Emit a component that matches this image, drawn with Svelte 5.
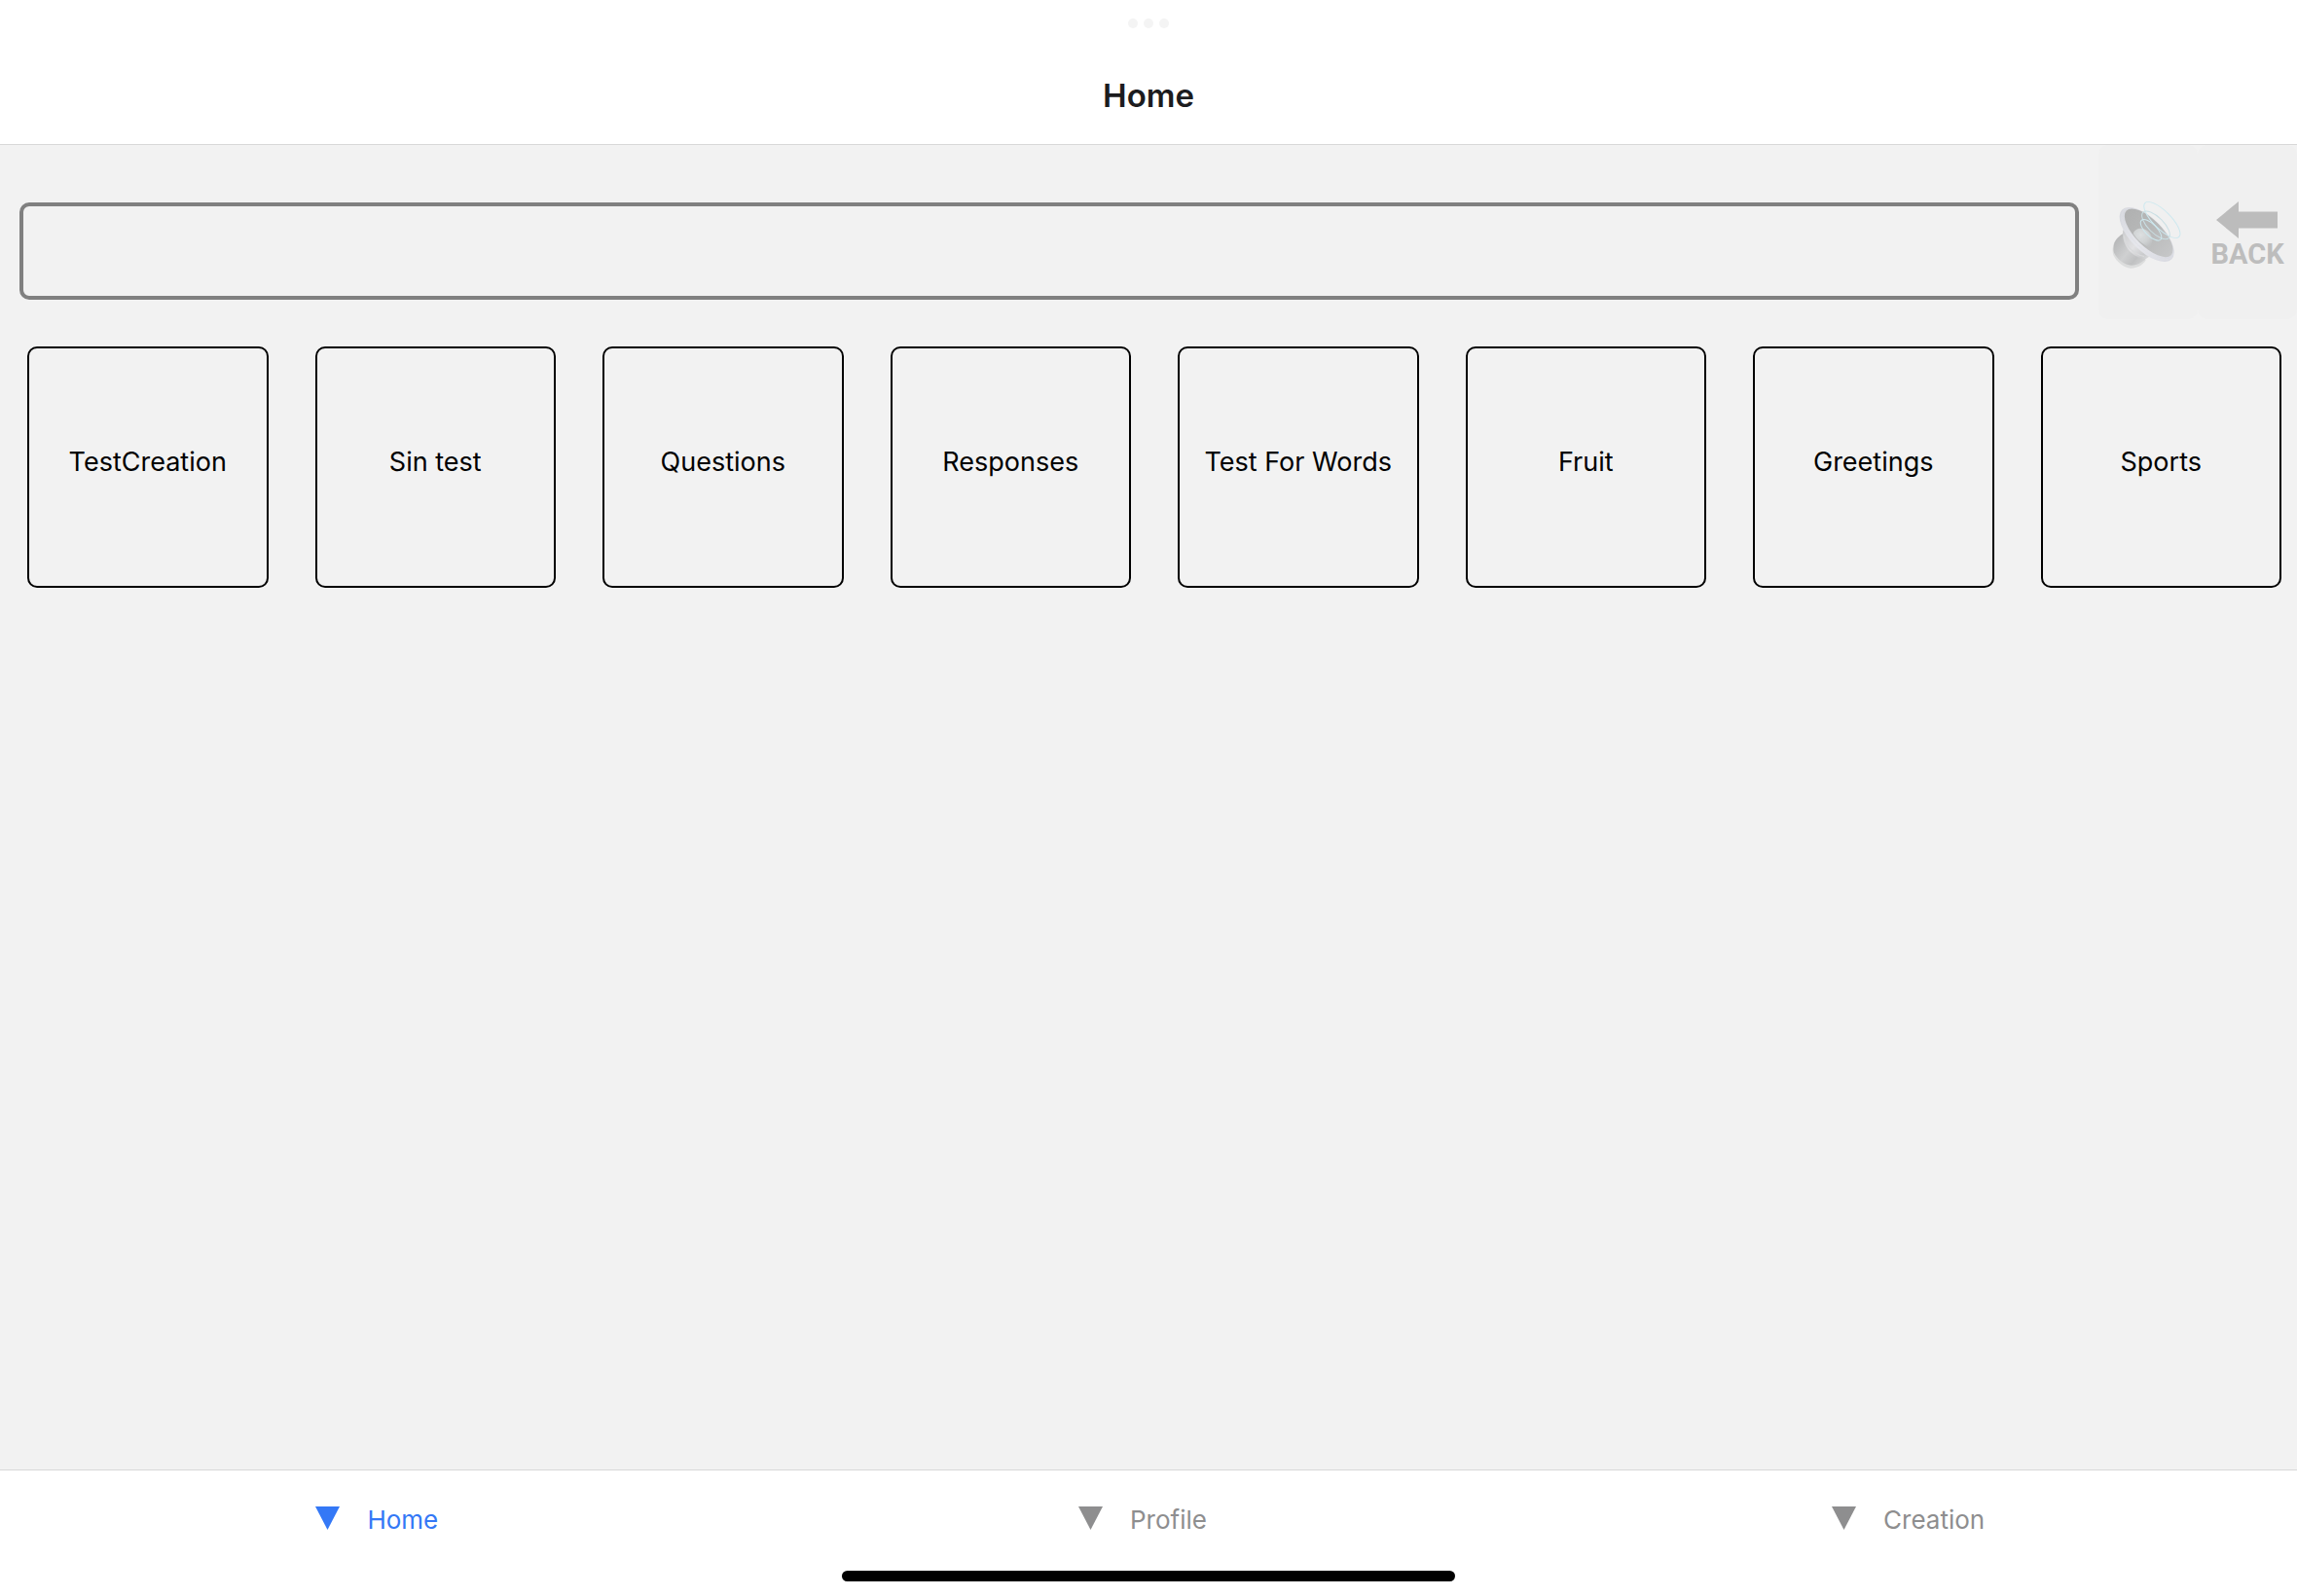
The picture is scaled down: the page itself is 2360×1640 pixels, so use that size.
<script>
  const categories = [
    'TestCreation',
    'Sin test',
    'Questions',
    'Responses',
    'Test For Words',
    'Fruit',
    'Greetings',
    'Sports'
  ];
  const tabs = ['Home', 'Profile', 'Creation'];
  let active = $state('Home');
  let sentence = $state('');
</script>

<div class="app">
  <header>
    <div class="dots" aria-hidden="true"><i></i><i></i><i></i></div>
    <h1>Home</h1>
  </header>

  <main>
    <div class="composer">
      <input type="text" aria-label="Sentence" bind:value={sentence} />
      <button class="action" type="button" aria-label="Speak" disabled>
        <svg class="speaker" viewBox="210 228 222 222" aria-hidden="true">
          <defs>
            <linearGradient id="magnet" x1="0" y1="0.2" x2="1" y2="0.9">
              <stop offset="0" stop-color="#b4b5b6" />
              <stop offset="0.45" stop-color="#cfd0d1" />
              <stop offset="0.7" stop-color="#c0c1c2" />
              <stop offset="1" stop-color="#d6d7d8" />
            </linearGradient>
            <linearGradient id="neck" x1="0" y1="0" x2="1" y2="1">
              <stop offset="0" stop-color="#cbccce" />
              <stop offset="0.5" stop-color="#e2e2e4" />
              <stop offset="0.8" stop-color="#c9cacc" />
              <stop offset="1" stop-color="#dfe0e1" />
            </linearGradient>
            <linearGradient id="rim" x1="0" y1="0" x2="1" y2="0">
              <stop offset="0" stop-color="#d6d8de" />
              <stop offset="0.5" stop-color="#e6e7ec" />
              <stop offset="1" stop-color="#d9dae1" />
            </linearGradient>
            <linearGradient id="cone" x1="0" y1="0" x2="1" y2="0">
              <stop offset="0" stop-color="#b0b1b1" />
              <stop offset="0.5" stop-color="#b8b9b9" />
              <stop offset="1" stop-color="#c6c7c8" />
            </linearGradient>
            <radialGradient id="dome" cx="0.4" cy="0.35" r="0.7">
              <stop offset="0" stop-color="#dcdfe0" />
              <stop offset="0.6" stop-color="#cfd2d3" />
              <stop offset="1" stop-color="#bfc1c2" />
            </radialGradient>
          </defs>
          <path d="M218 358C211 372 210 386 214 399C225 421 244 438 268 440C288 440 304 431 314 415L300 400L232 350Z" fill="#dcdddd" />
          <path d="M243 334C226 344 216 357 215 374C214 381 214 386 216 392C228 414 247 429 270 431C290 430 306 420 317 408L322 392Z" fill="url(#magnet)" />
          <path d="M244 322C240 342 246 366 262 385C278 403 298 411 313 410C320 408 325 404 330 398L300 360Z" fill="url(#neck)" />
          <path d="M247 340C249 367 275 398 309 403" fill="none" stroke="#d9dadb" stroke-width="4" />
          <ellipse cx="317" cy="336" rx="108" ry="50" transform="rotate(45 317 336)" fill="url(#rim)" />
          <ellipse cx="319" cy="334" rx="103" ry="45" transform="rotate(45 319 334)" fill="none" stroke="#dee0e5" stroke-width="2" />
          <ellipse cx="323" cy="331" rx="97" ry="41" transform="rotate(45 323 331)" fill="url(#cone)" />
          <path d="M275 333C278 322 289 316 302 317C320 320 333 335 334 353C334 364 330 371 323 375C303 366 285 350 275 333Z" fill="url(#dome)" />
          <g fill="none" stroke="#cde8ef" stroke-width="3">
            <ellipse cx="364" cy="291" rx="74" ry="27" transform="rotate(45 364 291)" />
            <ellipse cx="345" cy="307" rx="56" ry="24" transform="rotate(45 345 307)" stroke="#cadfe4" />
            <ellipse cx="330" cy="322" rx="42" ry="18" transform="rotate(45 330 322)" />
          </g>
        </svg>
      </button>
      <button class="action back" type="button" disabled>
        <svg class="arrow" viewBox="0 0 64 38" aria-hidden="true">
          <path d="M0 19L23 0V10.500H63V27.500H23V38Z" fill="#bcbcbc" />
        </svg>
        <span>BACK</span>
      </button>
    </div>

    <div class="grid">
      {#each categories as name}
        <button class="tile" type="button">{name}</button>
      {/each}
    </div>
  </main>

  <footer>
    <nav>
      {#each tabs as tab}
        <a
          href={'#' + tab.toLowerCase()}
          class:active={tab === active}
          aria-current={tab === active ? 'page' : undefined}
          onclick={() => (active = tab)}
        >
          <svg viewBox="0 0 25 24" aria-hidden="true"><path d="M0 0H25L12.500 24Z" fill="currentColor" /></svg>
          <span>{tab}</span>
        </a>
      {/each}
    </nav>
    <div class="indicator"></div>
  </footer>
</div>

<style>
  :global(body) {
    margin: 0;
  }
  .app {
    min-height: 100vh;
    display: flex;
    flex-direction: column;
    background: #f2f2f2;
    font-family: Inter, 'Liberation Sans', sans-serif;
  }
  .app * {
    box-sizing: border-box;
  }
  header {
    background: #fff;
    border-bottom: 1px solid #d8d8d8;
    display: flex;
    flex-direction: column;
    align-items: center;
    gap: 48px;
    padding: 19px 0 28px;
  }
  .dots {
    display: flex;
    gap: 6px;
  }
  .dots i {
    width: 10px;
    height: 10px;
    border-radius: 50%;
    background: #f4f4f4;
  }
  h1 {
    margin: 0;
    font-size: 33px;
    line-height: 43px;
    font-weight: 600;
    color: #1c1c1e;
  }
  main {
    flex: 1;
  }
  .composer {
    display: flex;
    align-items: flex-start;
    padding-left: 20px;
  }
  input {
    flex: 1;
    min-width: 0;
    height: 100px;
    margin: 59px 20px 0 0;
    padding: 0 20px;
    border: 4px solid #808080;
    border-radius: 10px;
    background: transparent;
    font: inherit;
    font-size: 27px;
    outline: none;
  }
  .action {
    width: 102px;
    height: 179px;
    padding: 6px 0 0;
    border: 0;
    border-radius: 10px;
    background: #f0f0f0;
    display: flex;
    flex-direction: column;
    align-items: center;
    justify-content: center;
  }
  .speaker {
    width: 74px;
    height: 74px;
  }
  .arrow {
    width: 64px;
    height: 38px;
  }
  .back span {
    font-family: Roboto, 'Liberation Sans', sans-serif;
    font-weight: 700;
    font-size: 29px;
    line-height: 32px;
    color: #bdbdbd;
  }
  .grid {
    display: grid;
    grid-template-columns: repeat(8, 1fr);
    gap: 48px;
    padding: 28px 16px 28px 28px;
  }
  .tile {
    aspect-ratio: 1;
    min-width: 0;
    padding: 0 0 10px;
    border: 2px solid #000;
    border-radius: 10px;
    background: transparent;
    color: #000;
    font: inherit;
    font-size: 27px;
    line-height: 34px;
  }
  footer {
    background: #fff;
    border-top: 1px solid #d8d8d8;
    display: flex;
    flex-direction: column;
    align-items: center;
    padding-bottom: 15px;
  }
  nav {
    width: 100%;
    display: grid;
    grid-template-columns: repeat(3, 1fr);
  }
  nav a {
    height: 103px;
    display: flex;
    align-items: center;
    justify-content: center;
    gap: 28px;
    padding: 0 12px 2px 0;
    color: #8e8e8f;
    text-decoration: none;
    font-size: 26px;
    line-height: 32px;
  }
  nav a.active {
    color: #3478f6;
  }
  nav svg {
    width: 25px;
    height: 24px;
    margin-bottom: 4px;
  }
  .indicator {
    width: 630px;
    max-width: 80%;
    height: 11px;
    border-radius: 6px;
    background: #000;
  }
</style>
